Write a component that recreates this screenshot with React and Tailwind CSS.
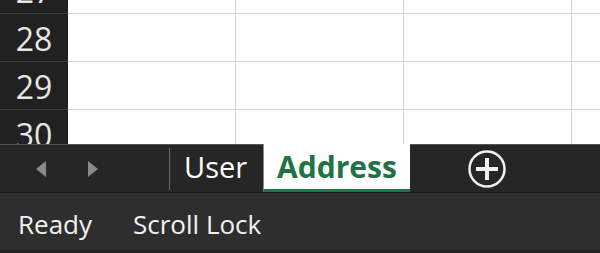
import React from "react";

const rows = [27, 28, 29, 30];
const cols = [0, 1, 2, 3];

export default function App() {
    return (
        <div
            className="w-[600px] h-[253px] flex flex-col overflow-hidden bg-white"
            style={{ fontFamily: '"Open Sans", "Noto Sans", sans-serif' }}
        >
            {/* grid */}
            <div className="h-[144px] overflow-hidden">
                <div className="-mt-[34px]">
                    {rows.map((r) => (
                        <div key={r} className="flex h-[48px]">
                            <div className="w-[68px] shrink-0 bg-[#212121] border-b border-[#3a3a3a] flex items-center justify-center text-[32px] text-[#e6e6e6] leading-none pt-[3px]">
                                {r}
                            </div>
                            {cols.map((c) => (
                                <div
                                    key={c}
                                    className="w-[168px] shrink-0 border-r border-b border-[#d4d4d4]"
                                />
                            ))}
                        </div>
                    ))}
                </div>
            </div>

            {/* sheet tabs */}
            <div className="h-[49px] flex bg-[#262626] border-b border-[#1a1a1a]">
                <div className="w-[263px] flex items-center border-t border-[#555555]">
                    <div className="w-[169px] flex items-center">
                        <svg width="10" height="16" viewBox="0 0 10 16" className="ml-[36px]">
                            <polygon points="10,0 10,16 0,8" fill="#8a8a8a" />
                        </svg>
                        <svg width="10" height="16" viewBox="0 0 10 16" className="ml-[42px]">
                            <polygon points="0,0 0,16 10,8" fill="#8a8a8a" />
                        </svg>
                    </div>
                    <div className="w-px h-[42px] bg-[#6a6a6a]" />
                    <span className="ml-[14px] text-[29px] text-white leading-none -mt-[4px]">User</span>
                </div>
                <div className="w-[147px] bg-white border-l border-[#8a8a8a] border-b-[3px] border-b-[#217346] flex items-center justify-center">
                    <span className="text-[30px] font-bold text-[#217346] leading-none">Address</span>
                </div>
                <div className="flex-1 flex items-center border-t border-[#555555]">
                    <svg width="40" height="40" viewBox="0 0 40 40" className="ml-[57px]">
                        <circle cx="20" cy="20" r="17.5" fill="none" stroke="#f0f0f0" strokeWidth="2.5" />
                        <rect x="9" y="18" width="22" height="4" fill="#f0f0f0" />
                        <rect x="18" y="9" width="4" height="22" fill="#f0f0f0" />
                    </svg>
                </div>
            </div>

            {/* status bar */}
            <div className="flex-1 bg-[#2e2e2e] border-b-[3px] border-[#222624] flex items-center pt-[5px] text-[26px] text-[#f2f2f2] leading-none">
                <span className="ml-[18px]">Ready</span>
                <span className="ml-[41px]">Scroll Lock</span>
            </div>
        </div>
    );
}
